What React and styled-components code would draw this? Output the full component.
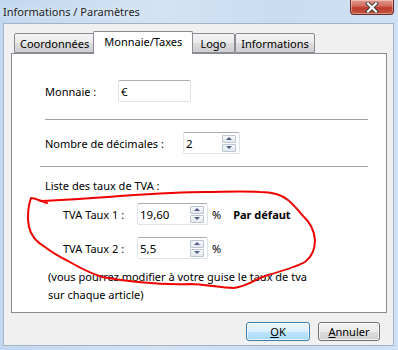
import React from "react";
import styled, { createGlobalStyle } from "styled-components";

const GlobalStyle = createGlobalStyle`
  html, body {
    margin: 0;
    padding: 0;
    background: #ffffff;
  }
  * {
    box-sizing: border-box;
  }
`;

const FONT = `"Segoe UI", "Noto Sans", Arial, sans-serif`;

const Window = styled.div`
  position: relative;
  width: 398px;
  height: 350px;
  display: flex;
  flex-direction: column;
  padding: 0 4px 4px 3px;
  background: linear-gradient(90deg, #c2d8ef 0%, #d3e3f4 40%, #c9dcf1 70%, #cfe1f4 100%);
  font-family: ${FONT};
  font-size: 11px;
  color: #000;
  overflow: hidden;
`;

const TitleBar = styled.div`
  height: 23px;
  display: flex;
  justify-content: space-between;
  align-items: flex-start;
`;

const Title = styled.span`
  margin-top: 4px;
  font-size: 11px;
  color: #1e1e1e;
  text-shadow: 0 0 6px rgba(255, 255, 255, 0.9);
`;

const CloseButton = styled.div`
  width: 44px;
  height: 15px;
  border: 1px solid #6b2a2a;
  border-top: none;
  border-radius: 0 0 4px 4px;
  background: linear-gradient(#e39a8c 0%, #d0685a 45%, #b83c2c 55%, #c9573f 100%);
  display: flex;
  align-items: center;
  justify-content: center;
  box-shadow: inset 0 0 0 1px rgba(255, 255, 255, 0.35);
`;

const Client = styled.div`
  flex: 1;
  display: flex;
  flex-direction: column;
  background: #f0f0f0;
  border: 1px solid #a3b4c8;
  padding: 7px 6px 0 7px;
`;

const TabRow = styled.div`
  display: flex;
  align-items: flex-end;
  height: 22px;
  padding-left: 3px;
  position: relative;
  z-index: 1;
`;

const Tab = styled.div`
  height: ${(p) => (p.$active ? "23px" : "20px")};
  min-width: 44px;
  margin: ${(p) => (p.$active ? "0 -2px -1px" : "0")};
  padding: ${(p) => (p.$active ? "2px 10px 0" : "2px 5px 0")};
  border: 1px solid #898c95;
  border-bottom: ${(p) => (p.$active ? "none" : "1px solid #898c95")};
  border-radius: 2px 2px 0 0;
  background: ${(p) =>
    p.$active ? "#ffffff" : "linear-gradient(#f2f2f2 0%, #ebebeb 50%, #dddddd 51%, #cfcfcf 100%)"};
  position: relative;
  z-index: ${(p) => (p.$active ? 2 : 1)};
  white-space: nowrap;
  text-align: center;
  font-size: 11px;
`;

const Panel = styled.div`
  height: 260px;
  background: #ffffff;
  border: 1px solid #898c95;
  padding: 26px 18px 0 33px;
  display: flex;
  flex-direction: column;
`;

const Row = styled.div`
  display: flex;
  align-items: center;
  height: 22px;
  margin-top: ${(p) => p.$mt || 0}px;
  padding-left: ${(p) => p.$indent || 0}px;
`;

const Label = styled.span`
  width: ${(p) => p.$w}px;
  flex-shrink: 0;
  white-space: nowrap;
`;

const TextBox = styled.div`
  width: ${(p) => p.$w}px;
  height: 22px;
  border: 1px solid #dde3ea;
  border-top-color: #abadb3;
  border-radius: 2px;
  display: flex;
  align-items: center;
  justify-content: space-between;
  padding: 0 2px;
  background: #fff;
  font-size: 11.5px;
`;

const Separator = styled.div`
  height: 1px;
  background: #a0a0a0;
  margin-top: ${(p) => p.$mt}px;
  margin-left: ${(p) => p.$ml || 0}px;
`;

const SpinCol = styled.div`
  display: flex;
  flex-direction: column;
  gap: 1px;
  margin-right: 1px;
`;

const SpinBtn = styled.div`
  width: 14px;
  height: 8px;
  border: 1px solid #bcc5d2;
  border-radius: 1px;
  background: linear-gradient(#f7f9fc, #e3e8ef);
  display: flex;
  align-items: center;
  justify-content: center;
`;

const Arrow = styled.div`
  width: 0;
  height: 0;
  border-left: 3px solid transparent;
  border-right: 3px solid transparent;
  border-${(p) => (p.$down ? "top" : "bottom")}: 3px solid #4a5f86;
`;

const Unit = styled.span`
  margin-left: 4px;
`;

const Bold = styled.span`
  margin-left: 12px;
  font-weight: 700;
`;

const Heading = styled.div`
  margin-top: 11px;
  line-height: 16px;
`;

const Note = styled.div`
  margin-top: 9px;
  padding-left: 3px;
  line-height: 18px;
`;

const Footer = styled.div`
  display: flex;
  justify-content: flex-end;
  gap: 8px;
  padding: 9px 7px 0 0;
`;

const Button = styled.button`
  width: ${(p) => p.$w}px;
  height: 19px;
  border: 1px solid ${(p) => (p.$default ? "#3c7fb1" : "#707070")};
  border-radius: 3px;
  background: ${(p) =>
    p.$default
      ? "linear-gradient(#eaf6fd 0%, #d9f0fc 50%, #bee6fd 51%, #a7d9f5 100%)"
      : "linear-gradient(#f2f2f2 0%, #ebebeb 50%, #dddddd 51%, #cfcfcf 100%)"};
  box-shadow: inset 0 0 0 1px rgba(255, 255, 255, 0.7);
  font-family: ${FONT};
  font-size: 11px;
  color: #000;
  padding: 0;
  line-height: 16px;
`;

const Overlay = styled.svg`
  position: absolute;
  left: 0;
  top: 0;
  pointer-events: none;
`;

const Spinner = ({ w, value }) => (
  <TextBox $w={w}>
    <span>{value}</span>
    <SpinCol>
      <SpinBtn>
        <Arrow />
      </SpinBtn>
      <SpinBtn>
        <Arrow $down />
      </SpinBtn>
    </SpinCol>
  </TextBox>
);

const App = () => {
  return (
    <>
      <GlobalStyle />
      <Window>
        <TitleBar>
          <Title>Informations / Paramètres</Title>
          <CloseButton>
            <svg width="14" height="11" viewBox="0 0 14 11">
              <path
                d="M3 1.5 L11 9.5 M11 1.5 L3 9.5"
                stroke="#3a3a3a"
                strokeWidth="4"
                strokeLinecap="square"
              />
              <path
                d="M3 1.5 L11 9.5 M11 1.5 L3 9.5"
                stroke="#ffffff"
                strokeWidth="2.2"
                strokeLinecap="square"
              />
            </svg>
          </CloseButton>
        </TitleBar>
        <Client>
          <TabRow>
            <Tab>Coordonnées</Tab>
            <Tab $active>Monnaie/Taxes</Tab>
            <Tab>Logo</Tab>
            <Tab>Informations</Tab>
          </TabRow>
          <Panel>
            <Row>
              <Label $w={73}>Monnaie :</Label>
              <TextBox $w={73}>€</TextBox>
            </Row>
            <Separator $mt={17} />
            <Row $mt={12}>
              <Label $w={138}>Nombre de décimales :</Label>
              <Spinner w={57} value="2" />
            </Row>
            <Separator $mt={12} $ml={-5} />
            <Heading>Liste des taux de TVA :</Heading>
            <Row $mt={9} $indent={18}>
              <Label $w={74}>TVA Taux 1 :</Label>
              <Spinner w={71} value="19,60" />
              <Unit>%</Unit>
              <Bold>Par défaut</Bold>
            </Row>
            <Row $mt={12} $indent={18}>
              <Label $w={74}>TVA Taux 2 :</Label>
              <Spinner w={71} value="5,5" />
              <Unit>%</Unit>
            </Row>
            <Note>
              (vous pourrez modifier à votre guise le taux de tva
              <br />
              sur chaque article)
            </Note>
          </Panel>
          <Footer>
            <Button $default $w={64}>
              <u>O</u>K
            </Button>
            <Button $w={62}>
              <u>A</u>nnuler
            </Button>
          </Footer>
        </Client>
        <Overlay width="398" height="350" viewBox="0 0 398 350">
          <path
            d="M47 203 C41 201 35 198 31 198 C28 206 27 218 29 227 C31 236 38 243 45 247 C54 254 60 257 68 261 C80 268 90 273 102 277 C130 282 160 285 190 284 C205 284 220 288 234 288 C248 286 256 279 265 276 C282 271 296 267 305 262 C313 256 315 248 315 240 C314 230 310 222 303 216 C298 210 294 205 288 200 C282 195 272 192 260 192 C240 191 222 192 205 192 C180 192 150 194 120 196 C95 198 70 200 40 201"
            fill="none"
            stroke="#f00000"
            strokeWidth="2"
            strokeLinecap="round"
            strokeLinejoin="round"
          />
        </Overlay>
      </Window>
    </>
  );
};

export default App;
